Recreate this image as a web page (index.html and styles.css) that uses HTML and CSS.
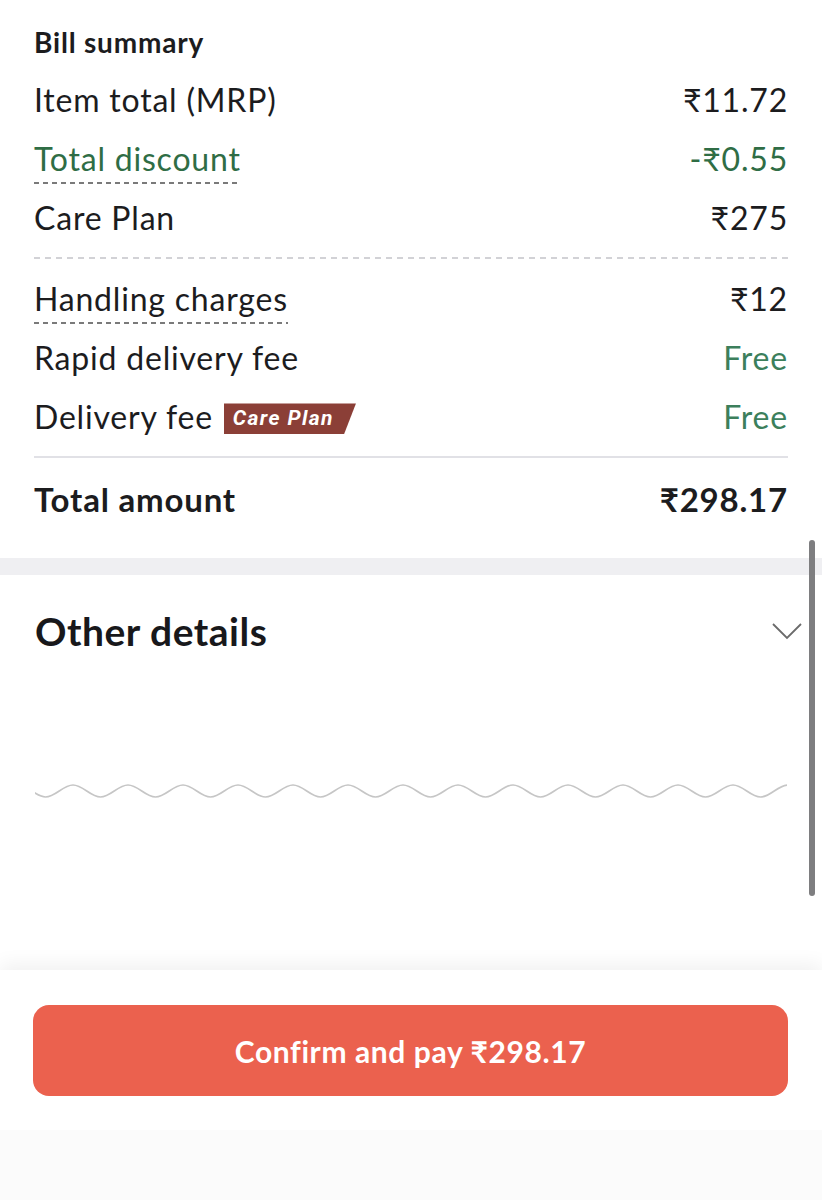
FILE: index.html
```html
<!DOCTYPE html>
<html>
<head>
<meta charset="utf-8">
<link rel="stylesheet" href="styles.css">
</head>
<body>
<div class="screen">
  <div class="content">
    <section class="bill">
      <h2 class="bill-title">Bill summary</h2>
      <div class="row"><span class="label">Item total (MRP)</span><span class="value">₹11.72</span></div>
      <div class="row green"><span class="label dotted">Total discount</span><span class="value">-₹0.55</span></div>
      <div class="row"><span class="label">Care Plan</span><span class="value">₹275</span></div>
      <div class="dash-sep"></div>
      <div class="row"><span class="label dotted">Handling charges</span><span class="value">₹12</span></div>
      <div class="row"><span class="label">Rapid delivery fee</span><span class="value free">Free</span></div>
      <div class="row"><span class="label">Delivery fee <span class="badge">Care Plan</span></span><span class="value free">Free</span></div>
      <div class="solid-sep"></div>
      <div class="row total"><span class="label">Total amount</span><span class="value">₹298.17</span></div>
    </section>
    <div class="band"></div>
    <section class="other">
      <div class="other-head">
        <h2 class="other-title">Other details</h2>
        <svg class="chevron" width="30" height="17" viewBox="0 0 30 17"><path d="M1 1 L15 15 L29 1" fill="none" stroke="#6b6b6b" stroke-width="1.8"/></svg>
      </div>
      <svg class="wave" width="752" height="16" viewBox="0 0 752 16"><path fill="none" stroke="#c6c6c6" stroke-width="1.7" d="M-44.5,14 c9.9,0 17.6,-12 27.5,-12 s17.6,12 27.5,12 s17.6,-12 27.5,-12 s17.6,12 27.5,12 s17.6,-12 27.5,-12 s17.6,12 27.5,12 s17.6,-12 27.5,-12 s17.6,12 27.5,12 s17.6,-12 27.5,-12 s17.6,12 27.5,12 s17.6,-12 27.5,-12 s17.6,12 27.5,12 s17.6,-12 27.5,-12 s17.6,12 27.5,12 s17.6,-12 27.5,-12 s17.6,12 27.5,12 s17.6,-12 27.5,-12 s17.6,12 27.5,12 s17.6,-12 27.5,-12 s17.6,12 27.5,12 s17.6,-12 27.5,-12 s17.6,12 27.5,12 s17.6,-12 27.5,-12 s17.6,12 27.5,12 s17.6,-12 27.5,-12 s17.6,12 27.5,12 s17.6,-12 27.5,-12 s17.6,12 27.5,12 s17.6,-12 27.5,-12 s17.6,12 27.5,12"/></svg>
    </section>
    <div class="scrollbar"></div>
  </div>
  <div class="bottom">
    <button class="pay">Confirm and pay ₹298.17</button>
  </div>
</div>
</body>
</html>
```

FILE: styles.css
```css
* { box-sizing: border-box; }
html, body { margin: 0; padding: 0; background: #ffffff; }
body {
  font-family: "Lato", "Noto Sans", "DejaVu Sans", sans-serif;
  color: #1c1c1e;
}
.screen {
  width: 822px;
  height: 1200px;
  display: flex;
  flex-direction: column;
  overflow: hidden;
}
.content {
  position: relative;
  height: 970px;
  flex: none;
  overflow: hidden;
}
.bill { padding: 24px 34px 29px 34px; }
.bill-title {
  margin: 0 0 10px 0;
  font-size: 28px;
  letter-spacing: 0.8px;
  line-height: 36px;
  font-weight: 700;
}
.row {
  display: flex;
  justify-content: space-between;
  align-items: center;
  height: 59px;
  font-size: 32px;
  letter-spacing: 0.8px;
}
.row .value { white-space: nowrap; }
.green { color: #2f6d45; }
.free { color: #3c7f5c; }
.dotted {
  padding-bottom: 6px;
  margin-top: 6px;
  background-image: repeating-linear-gradient(to right, #7a7a7a 0 5px, transparent 5px 9px);
  background-size: 100% 2px;
  background-repeat: no-repeat;
  background-position: left bottom;
}
.dash-sep {
  height: 2px;
  margin: 10px 0;
  background-image: repeating-linear-gradient(to right, #d2d2d6 0 6px, transparent 6px 11px);
}
.solid-sep {
  height: 2px;
  margin: 10px 0 11px 0;
  background: #e1e1e6;
}
.badge {
  display: inline-block;
  vertical-align: middle;
  margin-left: 2px;
  margin-top: -4px;
  padding: 0 22px 0 9px;
  height: 31px;
  line-height: 31px;
  font-family: "Roboto", "Liberation Sans", sans-serif;
  font-size: 21px;
  font-weight: 700;
  font-style: italic;
  letter-spacing: 1.4px;
  color: #ffffff;
  background: #8b3f37;
  clip-path: polygon(0 0, 100% 0, calc(100% - 12px) 100%, 0 100%);
}
.total {
  height: 60px;
  font-weight: 700;
  font-size: 33px;
}
.band { height: 17px; background: #efeff2; }
.other { padding: 34px 34px 0 35px; }
.other-head {
  display: flex;
  justify-content: space-between;
  align-items: center;
  height: 44px;
}
.other-title {
  margin: 0;
  font-size: 39px;
  letter-spacing: 0.5px;
  line-height: 44px;
  font-weight: 700;
  color: #18181b;
}
.chevron { margin-right: -14px; margin-top: 0; }
.wave { display: block; margin-top: 130px; }
.scrollbar {
  position: absolute;
  left: 809px;
  top: 540px;
  width: 6px;
  height: 356px;
  border-radius: 3px;
  background: #7e7e80;
}
.bottom {
  flex: 1;
  background: linear-gradient(#ffffff 0, #ffffff 160px, #fbfbfb 160px);
  box-shadow: 0 -6px 18px rgba(0,0,0,0.06);
  padding: 35px 34px 0 33px;
  position: relative;
}
.pay {
  display: block;
  width: 755px;
  height: 91px;
  border: none;
  border-radius: 16px;
  background: #eb614e;
  color: #ffffff;
  font-family: "Lato", "Noto Sans", sans-serif;
  font-size: 30px;
  letter-spacing: 0.6px;
  font-weight: 700;
}
```
